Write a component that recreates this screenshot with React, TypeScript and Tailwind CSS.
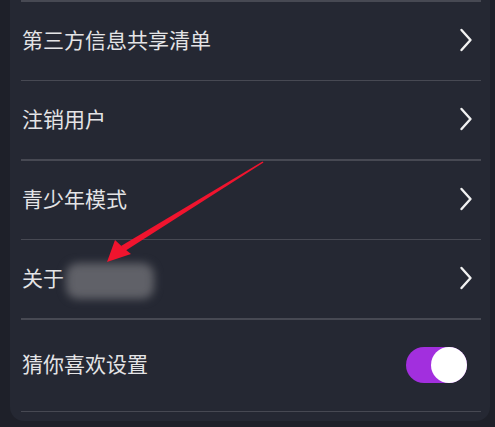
import React from "react";

function Chevron() {
  return (
    <svg width="14" height="24" viewBox="0 0 14 24" className="mr-[8px] -mt-[2px]">
      <path d="M2.5 2 L11.5 12 L2.5 22" fill="none" stroke="#f2f2f2" strokeWidth="2.4" strokeLinecap="round" strokeLinejoin="round" />
    </svg>
  );
}

function Row({ label, children, h = "h-[78px]" }: { label: React.ReactNode; children?: React.ReactNode; h?: string }) {
  return (
    <div className={`flex items-center justify-between ${h} pl-[1px]`}>
      <div className="text-[21px] text-[#e4e4e6] leading-none flex items-center -mt-[3px]">{label}</div>
      {children ?? <Chevron />}
    </div>
  );
}

function Divider() {
  return <div className="h-[1.5px] bg-[#474953]" />;
}

export default function App() {
  return (
    <div
      className="relative w-[495px] h-[427px] bg-[#1e2029] overflow-hidden"
      style={{ fontFamily: '"Noto Sans CJK SC", "Noto Sans", sans-serif' }}
    >
      <div className="ml-[10px] mr-[5px] h-[421px] rounded-b-[14px] bg-[#252833] pl-[11px] pr-[9px]">
        <Divider />
        <Row label="第三方信息共享清单" />
        <Divider />
        <Row label="注销用户" />
        <Divider />
        <Row label="青少年模式" />
        <Divider />
        <Row
          label={
            <>
              <span>关于</span>
              <span className="ml-[2px] mt-[6px] inline-block w-[88px] h-[36px] rounded-[12px] bg-[#606168] blur-[4px]" />
            </>
          }
        />
        <Divider />
        <Row label="猜你喜欢设置" h="h-[91px]">
          <div className="relative mr-[14px] w-[61px] h-[36px] rounded-full bg-[#a22fde]">
            <div className="absolute right-[0px] top-[0px] w-[36px] h-[36px] rounded-full bg-white" />
          </div>
        </Row>
        <Divider />
      </div>
      <svg className="absolute left-0 top-0 pointer-events-none" width="495" height="427" viewBox="0 0 495 427">
        <path d="M263.5 162.5 L262.5 161.5 L121 246 L125 251 Z" fill="#f0142e" />
        <path d="M107 262 L115 240 L123 247.5 L131 254 Z" fill="#f0142e" />
      </svg>
    </div>
  );
}
